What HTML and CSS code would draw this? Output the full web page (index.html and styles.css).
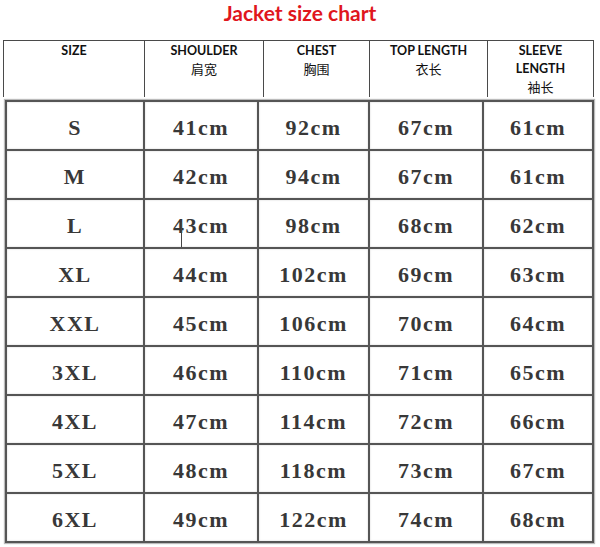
FILE: index.html
```html
<!DOCTYPE html>
<html lang="en">
<head>
<meta charset="utf-8">
<title>Jacket size chart</title>
<link rel="stylesheet" href="styles.css">
</head>
<body>
<div class="page">
  <h1 class="title">Jacket size chart</h1>
  <div class="head">
    <div class="hcell">SIZE</div>
    <div class="hcell">SHOULDER<br><span class="cjk">肩宽</span></div>
    <div class="hcell">CHEST<br><span class="cjk">胸围</span></div>
    <div class="hcell">TOP LENGTH<br><span class="cjk">衣长</span></div>
    <div class="hcell">SLEEVE<br>LENGTH<br><span class="cjk">袖长</span></div>
  </div>
  <div class="data">
    <div class="cell">S</div><div class="cell">41cm</div><div class="cell">92cm</div><div class="cell">67cm</div><div class="cell">61cm</div>
    <div class="cell">M</div><div class="cell">42cm</div><div class="cell">94cm</div><div class="cell">67cm</div><div class="cell">61cm</div>
    <div class="cell">L</div><div class="cell tick-cell">43cm<span class="tick"></span></div><div class="cell">98cm</div><div class="cell">68cm</div><div class="cell">62cm</div>
    <div class="cell">XL</div><div class="cell">44cm</div><div class="cell">102cm</div><div class="cell">69cm</div><div class="cell">63cm</div>
    <div class="cell">XXL</div><div class="cell">45cm</div><div class="cell">106cm</div><div class="cell">70cm</div><div class="cell">64cm</div>
    <div class="cell">3XL</div><div class="cell">46cm</div><div class="cell">110cm</div><div class="cell">71cm</div><div class="cell">65cm</div>
    <div class="cell">4XL</div><div class="cell">47cm</div><div class="cell">114cm</div><div class="cell">72cm</div><div class="cell">66cm</div>
    <div class="cell">5XL</div><div class="cell">48cm</div><div class="cell">118cm</div><div class="cell">73cm</div><div class="cell">67cm</div>
    <div class="cell">6XL</div><div class="cell">49cm</div><div class="cell">122cm</div><div class="cell">74cm</div><div class="cell">68cm</div>
  </div>
</div>
</body>
</html>
```

FILE: styles.css
```css
html, body {
  margin: 0;
  padding: 0;
  background: #ffffff;
}

.page {
  width: 600px;
  height: 547px;
  overflow: hidden;
}

.title {
  margin: 0;
  height: 40px;
  padding-top: 0;
  box-sizing: border-box;
  text-align: center;
  font-family: "Lato", "Liberation Sans", sans-serif;
  font-weight: 700;
  font-size: 21px;
  line-height: 26px;
  color: #e0161d;
}

.head {
  margin-left: 3px;
  width: 591px;
  height: 57px;
  box-sizing: border-box;
  display: grid;
  grid-template-columns: 140px 118px 105px 117px 105px;
  gap: 1px;
  padding: 1px;
  background: #4a4a4a;
}

.hcell {
  background: #ffffff;
  text-align: center;
  padding-top: 1px;
  font-family: "Lato", "Liberation Sans", sans-serif;
  font-weight: 700;
  font-size: 12.5px;
  line-height: 18px;
  color: #111111;
}

.cjk {
  font-family: "Noto Sans CJK SC", sans-serif;
  font-weight: 400;
  font-size: 13px;
}

.data {
  margin-top: 3px;
  margin-left: 5px;
  width: 589px;
  height: 443px;
  box-sizing: border-box;
  display: grid;
  grid-template-columns: 136px 112px 109px 112px 108px;
  grid-auto-rows: 47px;
  gap: 2px;
  padding: 2px;
  background: #555555;
  box-shadow: 0 0 1px 1px #bbbbbb;
}

.cell {
  background: #ffffff;
  display: flex;
  align-items: center;
  justify-content: center;
  padding-top: 5px;
  box-sizing: border-box;
  font-family: "Liberation Serif", "Times New Roman", serif;
  font-weight: 700;
  font-size: 22px;
  letter-spacing: 1.5px;
  color: #383838;
  box-shadow: inset 0 0 2px #cfcfcf;
}

.tick-cell {
  position: relative;
}

.tick {
  position: absolute;
  left: 36px;
  top: 22px;
  width: 1px;
  height: 25px;
  background: #444444;
}
```
